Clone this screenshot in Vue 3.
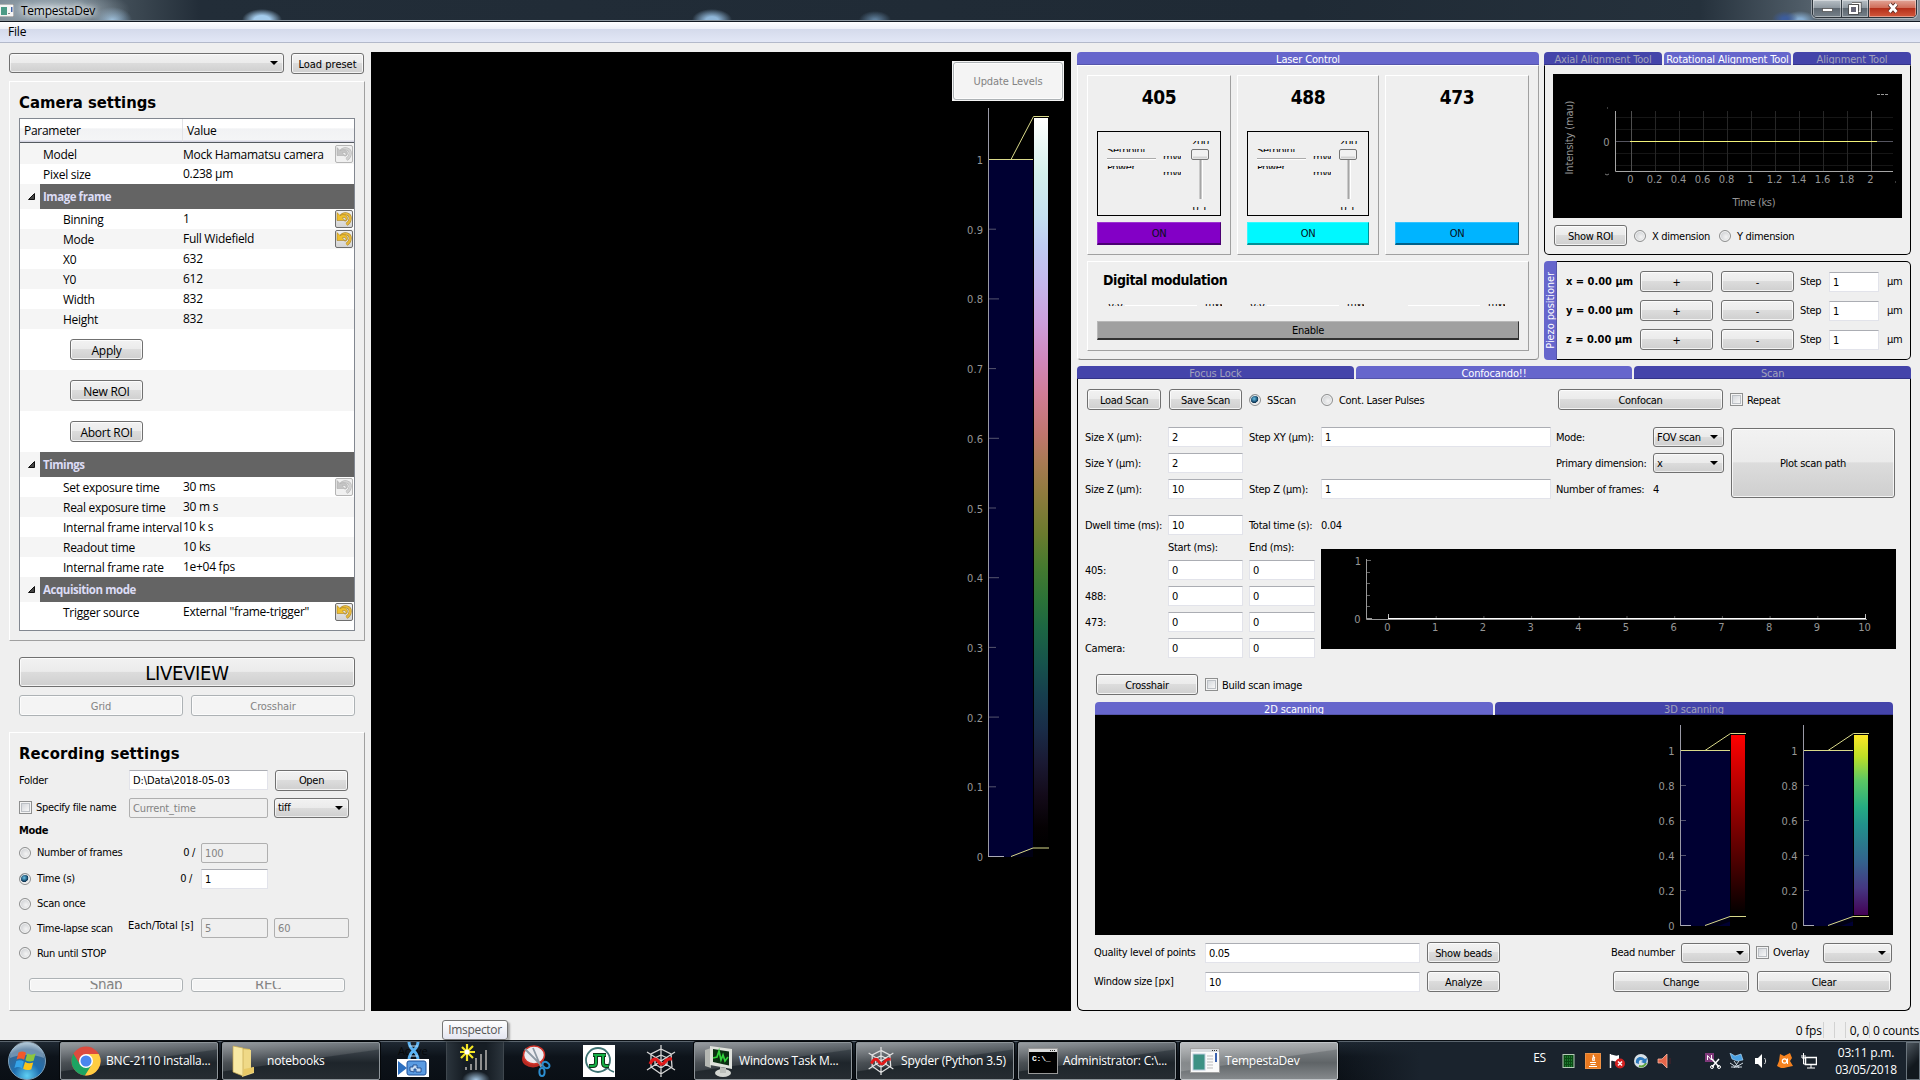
<script setup>
const params = [
  { name: 'Model', value: 'Mock Hamamatsu camera', lvl: 1, h: 21, undo: 'off', odd: true, big: true },
  { name: 'Pixel size', value: '0.238 µm', lvl: 1, h: 20 },
  { name: 'Image frame', group: true, h: 25 },
  { name: 'Binning', value: '1', h: 20, undo: 'on' },
  { name: 'Mode', value: 'Full Widefield', h: 20, undo: 'on', odd: true },
  { name: 'X0', value: '632', h: 20 },
  { name: 'Y0', value: '612', h: 20, odd: true },
  { name: 'Width', value: '832', h: 20 },
  { name: 'Height', value: '832', h: 20, odd: true },
  { action: 'Apply', h: 41 },
  { action: 'New ROI', h: 41, odd: true },
  { action: 'Abort ROI', h: 41 },
  { name: 'Timings', group: true, h: 25 },
  { name: 'Set exposure time', value: '30 ms', h: 20, undo: 'off' },
  { name: 'Real exposure time', value: '30 m s', h: 20, odd: true },
  { name: 'Internal frame interval', value: '10 k s', h: 20 },
  { name: 'Readout time', value: '10 ks', h: 20, odd: true },
  { name: 'Internal frame rate', value: '1e+04 fps', h: 20 },
  { name: 'Acquisition mode', group: true, h: 25 },
  { name: 'Trigger source', value: 'External "frame-trigger"', h: 20, undo: 'on' },
]
const lasers = [
  { name: '405', color: '#8300c6', edge: '#4b0072', control: true },
  { name: '488', color: '#00f8ff', edge: '#009196', control: true },
  { name: '473', color: '#00b4ff', edge: '#00618a', control: false },
]
const mainTicks = Array.from({ length: 11 }, (_, i) => ({
  label: i === 0 ? '0' : i === 10 ? '1' : (i / 10).toFixed(1),
  y: 804.5 - i * 69.7,
  w: i % 2 ? 7 : 10,
}))
const subTicks = [0, 0.2, 0.4, 0.6, 0.8, 1].map((v) => ({ label: String(v), y: 210.5 - v * 175 }))
const alignTicks = ['0', '0.2', '0.4', '0.6', '0.8', '1', '1.2', '1.4', '1.6', '1.8', '2'].map((label, i) => ({ label, x: 78.5 + i * 24 }))
const pulseTicks = Array.from({ length: 11 }, (_, i) => ({ label: String(i), x: 67.5 + i * 47.7 }))
const axes = ['x', 'y', 'z']
const channels = ['405:', '488:', '473:', 'Camera:']
</script>

<template>
  <div class="screen">
    <header class="titlebar">
      <svg class="appicon" width="15" height="13" viewBox="0 0 15 13"><rect x="0" y="0" width="15" height="13" fill="#f4f4f4" stroke="#777" /><rect x="2" y="3" width="6" height="8" fill="#4b9a86" /><rect x="9" y="9" width="2" height="1" fill="#888" /><rect x="12" y="3" width="1.5" height="5" fill="#4466a8" /></svg>
      <span class="apptitle">TempestaDev</span>
      <div class="winbtns">
        <span class="wb min"><svg width="28" height="17"><rect x="9.5" y="8.5" width="10" height="3" fill="#fff" stroke="#555" stroke-width=".8" /></svg></span>
        <span class="wb max"><svg width="26" height="17"><path d="M10 3.500h8v8h-2" fill="none" stroke="#444" stroke-width="3" /><path d="M10 3.500h8v8h-2" fill="none" stroke="#fff" stroke-width="1.600" /><rect x="8" y="6" width="7" height="7" fill="none" stroke="#444" stroke-width="3.500" /><rect x="8" y="6" width="7" height="7" fill="#667" stroke="#fff" stroke-width="2" /></svg></span>
        <span class="wb close"><svg width="47" height="17"><path d="M20.500 4l7 8M27.500 4l-7 8" stroke="#5a2a22" stroke-width="4.500" /><path d="M20.500 4l7 8M27.500 4l-7 8" stroke="#fff" stroke-width="2.800" /></svg></span>
      </div>
    </header>
    <nav class="menubar">File</nav>

    <main class="body">
      <section class="left">
        <div class="preset">
          <div class="combo presetcombo"><i class="arrow"></i></div>
          <button class="btn presetbtn">Load preset</button>
        </div>
        <div class="frame camera">
          <h1>Camera settings</h1>
          <div class="tree">
            <div class="treehead"><span>Parameter</span><span>Value</span></div>
            <div v-for="p in params" :key="p.name || p.action" class="prow" :class="{ odd: p.odd, group: p.group, action: p.action, top: p.lvl }" :style="{ height: p.h + 'px' }">
              <template v-if="p.group">
                <span class="twist"><svg width="7" height="7"><path d="M6.500 .5v6h-6z" fill="#444" stroke="#111" /></svg></span>
                <span class="gname">{{ p.name }}</span>
              </template>
              <button v-else-if="p.action" class="btn pact">{{ p.action }}</button>
              <template v-else>
                <span class="pname">{{ p.name }}</span>
                <span class="pval" :class="{ low: p.big }">{{ p.value }}</span>
                <span v-if="p.undo" class="undo" :class="p.undo">
                  <svg width="16" height="16" viewBox="0 0 16 16"><path class="u3" d="M4.500 5.500C8 .8 14.500 2.500 14.200 7.500c-.1 2.500-1.500 4.500-3.700 6" /><path class="u2" d="M4.500 5.500C8 .8 14.500 2.500 14.200 7.500c-.1 2.500-1.500 4.500-3.700 6" /><path class="u1" d="M1 1.500v8h8L6.300 7C8 5.800 10 6.600 10 8.300c0 .8-.4 1.400-1.200 1.900 1.700-.3 2.700-1.300 2.700-3C11.500 4 7.500 2.500 4 4.600z" /></svg>
                </span>
              </template>
            </div>
          </div>
        </div>
        <div class="live">
          <button class="btn liveview">LIVEVIEW</button>
          <div class="pair"><button class="btn off">Grid</button><button class="btn off">Crosshair</button></div>
        </div>
        <div class="frame recording">
          <h1>Recording settings</h1>
          <div class="rec">
            <span class="lbl">Folder</span><div class="inp span2 path">D:\Data\2018-05-03</div><button class="btn open">Open</button>
            <span class="lbl"><i class="check"></i>Specify file name</span><div class="inp dis span2">Current_time</div><div class="combo tiff">tiff<i class="arrow"></i></div>
            <b class="mode">Mode</b>
            <span class="lbl"><i class="radio"></i>Number of frames</span><span class="cnt">0 /</span><div class="inp dis">100</div><span></span>
            <span class="lbl"><i class="radio on"></i>Time (s)</span><span class="cnt two">0 /</span><div class="inp">1</div><span></span>
            <span class="lbl full"><i class="radio"></i>Scan once</span>
            <span class="lbl"><i class="radio"></i>Time-lapse scan</span><span class="each">Each/Total [s]</span><div class="inp dis">5</div><div class="inp dis last">60</div>
            <span class="lbl full"><i class="radio"></i>Run until STOP</span>
          </div>
          <div class="snaprow"><button class="btn off"><span>Snap</span></button><button class="btn off"><span>REC</span></button></div>
        </div>
      </section>

      <section class="view">
        <svg class="hist" width="700" height="959">
          <rect x="618" y="108" width="44" height="697" fill="#000032" />
          <path d="M617.500 56v749" stroke="#9a9aa6" />
          <g v-for="t in mainTicks" :key="t.label">
            <path :d="`M618 ${t.y}h${t.w}`" stroke="#55556e" />
            <text x="612" :y="t.y + 4.5" text-anchor="end" class="tick" :textLength="t.label.length > 1 ? 16 : 6">{{ t.label }}</text>
          </g>
          <foreignObject x="663" y="66" width="14" height="729"><div class="cube"></div></foreignObject>
          <path d="M618 107.500h44M640 107.500L662.500 64.500H678" stroke="#d9d98a" fill="none" />
          <path d="M617 804.500h16" stroke="#aaaab8" />
          <path d="M640 805l22-8.500v8.500z" fill="#000" opacity=".6" />
          <path d="M640 804.500l22-8.500h16" stroke="#d9d98a" fill="none" />
        </svg>
        <div class="updwrap"><button class="btn off upd">Update Levels</button></div>
      </section>

      <section class="docks">
        <div class="toprow">
          <div class="dock laser">
            <div class="tabs"><span class="tab act">Laser Control</span></div>
            <div class="dbody lbody">
              <div class="lcards">
                <div v-for="l in lasers" :key="l.name" class="frame lcard">
                  <h2>{{ l.name }}</h2>
                  <div class="lctl" :class="{ none: !l.control }">
                    <template v-if="l.control">
                      <div class="sets">
                        <div class="clip"><span>Setpoint</span></div>
                        <i class="groove"></i>
                        <div class="clip"><span>Power</span></div>
                      </div>
                      <div class="units"><div class="clip"><span>mW</span></div><div class="clip"><span>mW</span></div></div>
                      <div class="slide">
                        <div class="clip"><span>200</span></div>
                        <svg width="20" height="56"><path d="M10.500 10v41" stroke="#a5a5a5" stroke-width="2" /><path d="M12.500 10v41" stroke="#fff" /><rect x="1.500" y="1.500" width="17" height="10" rx="1.500" fill="#f1f1f1" stroke="#767676" /><path d="M3 9.500h14" stroke="#d2d2d2" stroke-width="2" /></svg>
                        <div class="clip"><span>0.1</span></div>
                      </div>
                    </template>
                  </div>
                  <button class="onbtn" :style="{ background: l.color, borderRightColor: l.edge, borderBottomColor: l.edge }">ON</button>
                </div>
              </div>
              <div class="frame digital">
                <h3>Digital modulation</h3>
                <div class="drow"><div v-for="(l, i) in lasers" :key="i" class="dcell"><div class="clip"><span>{{ i < 2 ? '0.0' : '' }}</span></div><i></i><div class="clip mw"><span>mW</span></div></div></div>
                <button class="enable">Enable</button>
              </div>
            </div>
          </div>

          <div class="rightcol">
            <div class="dock align">
              <div class="tabs atabs"><span class="tab">Axial Alignment Tool</span><span class="tab act">Rotational Alignment Tool</span><span class="tab">Alignment Tool</span></div>
              <div class="dbody abody">
                <svg width="349" height="144" class="plot">
                  <path d="M63 43.500h277M63 55.500h277M63 79.500h277M63 91.500h277" stroke="#161616" />
                  <path v-for="t in alignTicks" :key="t.x" :d="`M${t.x} 37v60`" :stroke="t.label === '0' || t.label === '2' ? '#505050' : '#262626'" />
                  <path d="M62.500 37v60.500H340" stroke="#a6a6a6" fill="none" />
                  <path d="M63 67.500h277" stroke="#555560" />
                  <path d="M77 67.500h247" stroke="#f2f27a" />
                  <path d="M324 20.500h12" stroke="#999" stroke-dasharray="3 1" />
                  <text v-for="t in alignTicks" :key="t.label" :x="t.x - 1" y="109" text-anchor="middle" class="tick">{{ t.label }}</text>
                  <text x="53.500" y="72" text-anchor="middle" class="tick">0</text>
                  <path d="M52 100l2 1 2-1M54 34h1M342 108h1" stroke="#777" fill="none" />
                  <text x="201" y="132" text-anchor="middle" class="tick" textLength="43">Time (ks)</text>
                  <text transform="translate(20 63.500) rotate(-90)" text-anchor="middle" class="tick" textLength="74">Intensity (mau)</text>
                </svg>
                <div class="roi"><button class="btn">Show ROI</button><i class="radio"></i><span class="xd">X dimension</span><i class="radio"></i><span>Y dimension</span></div>
              </div>
            </div>
            <div class="dock piezo">
              <div class="vtab"><span>Piezo positioner</span></div>
              <div class="pbody">
                <div v-for="a in axes" :key="a" class="prow2"><b>{{ a }} = 0.00 µm</b><button class="btn">+</button><button class="btn">-</button><span class="step">Step</span><div class="inp">1</div><span class="um">µm</span></div>
              </div>
            </div>
          </div>
        </div>

        <div class="dock scan">
          <div class="tabs stabs"><span class="tab">Focus Lock</span><span class="tab act">Confocando!!</span><span class="tab">Scan</span></div>
          <div class="sbody">
            <div class="srow">
              <button class="btn b1">Load Scan</button><button class="btn b2">Save Scan</button><i class="radio on"></i><span class="t1">SScan</span><i class="radio"></i><span class="t2">Cont. Laser Pulses</span><button class="btn b3">Confocan</button><i class="check"></i><span>Repeat</span>
            </div>
            <div class="sgrid">
              <span>Size X (µm):</span><div class="inp">2</div><span class="c4">Step XY (µm):</span><div class="inp c6">1</div><span class="c8">Mode:</span><div class="combo c9">FOV scan<i class="arrow"></i></div>
              <button class="btn plotbtn">Plot scan path</button>
              <span class="c1">Size Y (µm):</span><div class="inp">2</div><span class="c8">Primary dimension:</span><div class="combo c9">x<i class="arrow"></i></div>
              <span class="c1">Size Z (µm):</span><div class="inp">10</div><span class="c4">Step Z (µm):</span><div class="inp c6">1</div><span class="c8">Number of frames:</span><span class="c9">4</span>
            </div>
            <div class="tgrid">
              <span>Dwell time (ms):</span><div class="inp">10</div><span class="c4">Total time (s):</span><span class="c6">0.04</span>
              <span class="c2">Start (ms):</span><span class="c4">End (ms):</span>
              <template v-for="c in channels" :key="c"><span class="c1">{{ c }}</span><div class="inp">0</div><div class="inp c4">0</div></template>
              <svg class="pulse" width="575" height="100">
                <path d="M45.500 10v60.500H546" stroke="#9a9a9a" fill="none" />
                <path d="M46 11.500h4M46 23.500h3M46 34.500h3M46 46.500h3M46 57.500h3" stroke="#666" />
                <path v-for="t in pulseTicks" :key="t.x" :d="`M${t.x} 67v3`" stroke="#555" />
                <path d="M67.500 65v4M544.500 65v5" stroke="#bbb" />
                <path d="M46 69.500h5" stroke="#999" />
                <path d="M67 69.500h478" stroke="#fff" />
                <text x="40" y="16" text-anchor="end" class="tick">1</text><text x="39.500" y="74" text-anchor="end" class="tick">0</text>
                <text v-for="t in pulseTicks" :key="t.label" :x="t.x - 1" y="82" text-anchor="middle" class="tick">{{ t.label }}</text>
              </svg>
            </div>
            <div class="crow"><button class="btn">Crosshair</button><i class="check"></i><span>Build scan image</span></div>
            <div class="tabs ctabs"><span class="tab act">2D scanning</span><span class="tab">3D scanning</span></div>
            <svg class="imgs" width="798" height="220">
              <defs>
                <linearGradient id="red" x2="0" y2="1"><stop offset="0" stop-color="#f00" /><stop offset="1" stop-color="#000" /></linearGradient>
                <linearGradient id="vir" x2="0" y2="1"><stop offset="0" stop-color="#fde725" /><stop offset=".12" stop-color="#bddf26" /><stop offset=".25" stop-color="#5cc863" /><stop offset=".4" stop-color="#25ac82" /><stop offset=".5" stop-color="#21918c" /><stop offset=".7" stop-color="#33638d" /><stop offset=".85" stop-color="#453781" /><stop offset="1" stop-color="#440154" /></linearGradient>
              </defs>
              <g v-for="(g, i) in ['red', 'vir']" :key="g" :transform="`translate(${i * 123} 0)`">
                <rect x="586" y="36" width="49" height="175" fill="#000032" />
                <path d="M585.500 10v201" stroke="#9a9aa6" />
                <g v-for="t in subTicks" :key="t.label"><path :d="`M586 ${t.y}h5`" stroke="#55556e" /><text x="579.500" :y="t.y + 4.500" text-anchor="end" class="tick" :textLength="t.label.length > 1 ? 16 : 6">{{ t.label }}</text></g>
                <rect x="636" y="20" width="14" height="180" :fill="`url(#${g})`" />
                <path d="M586 35.500h49M610 35.500L635.500 18.500H651" stroke="#d9d98a" fill="none" />
                <path d="M586 210.500h10" stroke="#aaaab8" />
                <path d="M610 211l25-9.500v5l-12 4.500z" fill="#000" opacity=".6" />
                <path d="M610 210.500l25-9H651" stroke="#d9d98a" fill="none" />
              </g>
            </svg>
            <div class="bgrid">
              <span>Quality level of points</span><div class="inp">0.05</div><button class="btn">Show beads</button>
              <div class="bead"><span>Bead number</span><div class="combo"><i class="arrow"></i></div><i class="check"></i><span class="ov">Overlay</span><div class="combo"><i class="arrow"></i></div></div>
              <span>Window size [px]</span><div class="inp">10</div><button class="btn">Analyze</button>
              <div class="bead two"><button class="btn">Change</button><button class="btn">Clear</button></div>
            </div>
          </div>
        </div>
      </section>
    </main>

    <footer class="status"><span class="s1">0 fps</span><i></i><i class="g1"></i><i class="g2"></i><span class="s2">0, 0</span><i></i><span class="s3">0 counts</span></footer>
    <div class="tooltip">Imspector</div>

    <footer class="taskbar">
      <svg class="orb" width="40" height="40" viewBox="0 0 40 40">
        <defs><radialGradient id="orb" cx=".5" cy=".9" r=".9"><stop offset="0" stop-color="#5fd0f4" /><stop offset=".4" stop-color="#1f6fb0" /><stop offset=".8" stop-color="#3a668f" /><stop offset="1" stop-color="#9bb8cc" /></radialGradient></defs>
        <circle cx="20" cy="20" r="18.500" fill="url(#orb)" stroke="#7fa3bd" stroke-width="1" />
        <path d="M3 17a17 17 0 0 1 34 0c-9-4-25-4-34 0z" fill="#fff" opacity=".28" />
        <path d="M11.500 11.500c3-1.500 5-1.200 7.500.3l-1.900 7c-2.500-1.500-4.600-1.600-7.500-.4z" fill="#f2592a" />
        <path d="M20.300 12.500c2.700 1.500 5 1.500 8.300.1l-2 7.100c-3 1.200-5.400 1-8.200-.5z" fill="#8cc63e" />
        <path d="M9.300 20c2.800-1.200 5-1 7.500.5l-1.900 6.800c-2.600-1.500-4.600-1.600-7.500-.3z" fill="#35a3e8" />
        <path d="M18 21c2.800 1.500 5.100 1.600 8.200.4l-1.900 6.800c-3 1.300-5.500 1.100-8.200-.4z" fill="#fcc419" />
      </svg>
      <div class="task first">
        <svg width="30" height="30" viewBox="0 0 30 30"><circle cx="15" cy="15" r="14.500" fill="#dd4b3e" /><path d="M2.400 7.800A14.500 14.500 0 0 0 14 29.500l7-10.600-12-.4z" fill="#1da462" /><path d="M15 8h12.700A14.500 14.500 0 0 1 14 29.500l7.400-12z" fill="#ffcd42" /><circle cx="15" cy="15" r="7" fill="#fff" /><circle cx="15" cy="15" r="5.500" fill="#4a86ee" /></svg>
        <span>BNC-2110 Installa...</span>
      </div>
      <div class="task second">
        <svg width="24" height="32" viewBox="0 0 24 32"><path d="M9 3l9 1v22l-9 3z" fill="#d9bc55" /><path d="M10 4l9 1v18l3-1v6l-12 4z" fill="#efd987" /><path d="M1 1l10 2v28L1 27z" fill="#f8e9a4" stroke="#c5a84d" stroke-width=".7" /><path d="M12 24l10-2v5l-11 4z" fill="#e8c966" /></svg>
        <span>notebooks</span>
      </div>
      <div class="quick">
        <div class="q active"><b>Active</b><svg width="32" height="38" viewBox="0 0 32 38"><path d="M12 0c0 9 9 8 9 18M21 0c0 9-9 8-9 18" stroke="#5bb3f2" stroke-width="3" fill="none" /><path d="M12 4h9M13 14h8" stroke="#b6ddfa" /><rect x="0" y="17" width="32" height="18" fill="#fff" /><path d="M1 19l9 7-9 7z" fill="#2c6fc0" /><rect x="10" y="19" width="19" height="14" rx="2" fill="#5a9be2" stroke="#1b4f9a" /><path d="M13 29v-4h3v-2h4v3h4v4h-5v-3h-2v3z" fill="#c5dcf5" stroke="#143c80" stroke-width=".8" /></svg></div>
        <div class="q insp"><svg width="34" height="36" viewBox="0 0 34 36"><path d="M9 1v17M2 9h15M4 4l11 11M15 3L3 15" stroke="#f4e626" stroke-width="2.200" /><circle cx="9" cy="9" r="2.500" fill="#fff" /><path d="M8 27v-3M13 27v-6M18 27V15M23 27V11M28 27V7" stroke="#8f8f8f" stroke-width="2" /></svg></div>
        <div class="q"><svg width="32" height="34" viewBox="0 0 32 34"><ellipse cx="12" cy="15" rx="11" ry="8.500" fill="#b82a22" /><ellipse cx="13" cy="11" rx="10.500" ry="9" fill="#ececf0" stroke="#d1362c" stroke-width="1.500" /><path d="M4 5l17 17M12 4l8 19" stroke="#8d98a3" stroke-width="1.800" /><ellipse cx="25" cy="21" rx="3.800" ry="2.800" fill="none" stroke="#2c8ed0" stroke-width="2" transform="rotate(35 25 21)" /><ellipse cx="21" cy="28" rx="2.600" ry="4" fill="none" stroke="#2c8ed0" stroke-width="2" /></svg></div>
        <div class="q"><svg width="32" height="32" viewBox="0 0 32 32"><rect width="32" height="32" fill="#fff" /><circle cx="15" cy="15" r="12" fill="none" stroke="#3d7373" stroke-width="1.800" /><path d="M21 25l4-2c1 2 3 3 6 4" fill="none" stroke="#3d7373" stroke-width="1.600" /><path d="M10 10h13M13 10v8c0 2-1 3-3 3H6M20 10v8c0 2 1 3 3 3h3" fill="none" stroke="#12331b" stroke-width="4" /><path d="M10.500 10h12M13 10v8c0 2-1 3-3 3H6.500M20 10v8c0 2 1 3 3 3h2.500" fill="none" stroke="#14b045" stroke-width="2" /></svg></div>
        <div class="q"><svg width="34" height="34" viewBox="0 0 34 34"><path d="M17 1v32M3 8l28 18M31 8L3 26M17 5l10 5 1 13-11 7-10-7 0-13zM17 11l6 3v6l-6 4-6-4v-6z" fill="none" stroke="#d6d6d6" stroke-width="1.300" /><path d="M6 20c3-6 6-6 8-3s4 5 7 1 4-3 7-3" fill="none" stroke="#e11919" stroke-width="3.200" /></svg></div>
      </div>
      <div class="task">
        <svg width="30" height="34" viewBox="0 0 30 34"><path d="M1 6l6-2v20l-6-2z" fill="#b5b8b3" /><path d="M6 2l22 3v20L6 21z" fill="#dfe2dc" /><path d="M9 5l16 2.500v14L9 18z" fill="#0b2f12" /><path d="M9 14l4-1 2-6 2 9 2-5 2 6 3-4" stroke="#32d13c" stroke-width="1.700" fill="none" /><ellipse cx="19" cy="29" rx="8" ry="4" fill="#d5d7d2" /><path d="M16 23l6 1v5h-6z" fill="#bcbfba" /></svg>
        <span>Windows Task M...</span>
      </div>
      <div class="task">
        <svg width="30" height="30" viewBox="0 0 34 34"><path d="M17 1v32M3 8l28 18M31 8L3 26M17 5l10 5 1 13-11 7-10-7 0-13zM17 11l6 3v6l-6 4-6-4v-6z" fill="none" stroke="#e2e2e2" stroke-width="1.400" /><path d="M6 20c3-6 6-6 8-3s4 5 7 1 4-3 7-3" fill="none" stroke="#e11919" stroke-width="3.200" /></svg>
        <span>Spyder (Python 3.5)</span>
      </div>
      <div class="task">
        <svg width="30" height="26" viewBox="0 0 30 26"><rect x=".5" y=".5" width="29" height="25" fill="#000" stroke="#999" /><rect x="1" y="1" width="28" height="3" fill="#dcdcdc" /><path d="M22 2.500h6" stroke="#333" stroke-dasharray="1 1" /><text x="4" y="13" font-size="8" fill="#fff" font-family="Liberation Mono, monospace" font-weight="bold">C:\_</text></svg>
        <span>Administrator: C:\...</span>
      </div>
      <div class="task current">
        <svg width="30" height="25" viewBox="0 0 30 25"><rect x=".5" y=".5" width="29" height="24" fill="#fafafa" stroke="#a2a2a2" /><rect x="1" y="1" width="28" height="3" fill="#d8dce0" /><path d="M22 2.500h6" stroke="#333" stroke-dasharray="1 1" /><rect x="3" y="6" width="12" height="16" fill="#3d9184" stroke="#bcd" /><path d="M17 8h6M17 11h6M17 14h6M17 17h6M17 20h6" stroke="#bbb" /><rect x="25" y="5" width="2" height="9" fill="#3a62b0" /></svg>
        <span>TempestaDev</span>
      </div>
      <div class="tray">
        <span class="es">ES</span>
        <svg width="16" height="16"><rect x="2" y="1.500" width="11" height="13" fill="#0a4a14" stroke="#b5cdb8" /><path d="M4 4h8M4 7h8M4 10h8M4 13h8" stroke="#2fa846" stroke-dasharray="1 1" /></svg>
        <svg width="16" height="16"><rect width="16" height="16" rx="1.500" fill="#e9791f" stroke="#f4ad6d" /><path d="M8 2c2 2-2 3 0 6M10 4c-2 1 0 2-1 4M5 9.500h6M5.500 11.500h5M4 13.500h8" stroke="#fff" fill="none" stroke-width="1.200" /></svg>
        <svg width="16" height="16"><path d="M1.500 1v14" stroke="#fff" stroke-width="1.500" /><path d="M2 2c3-1 4 2 8 0v6c-4 2-5-1-8 0z" fill="#fff" /><circle cx="11" cy="10.500" r="5" fill="#d32020" /><path d="M9 8.500l4 4M13 8.500l-4 4" stroke="#fff" stroke-width="1.500" /></svg>
        <svg width="16" height="16"><circle cx="8" cy="8" r="7" fill="#d7e1e8" /><path d="M3 10C2 4 8 2 12 6l2-1-1 6-5-2 2-1C8 6 5 7 6 11z" fill="#2c79bd" /><path d="M6 13c3 1 6 0 7-3" stroke="#5fa53c" stroke-width="2" fill="none" /></svg>
        <svg width="16" height="16"><path d="M1 6h4l5-5v14l-5-5H1z" fill="#e5664a" stroke="#f6b39f" stroke-width=".8" /><path d="M13 5v6" stroke="#54222a" /></svg>
        <svg class="gap" width="16" height="16"><rect width="9" height="9" fill="#80397b" /><path d="M2.500 7V2.500l4 4.500V2" stroke="#fff" fill="none" /><path d="M7 6l7 8M14 6l-7 8" stroke="#fff" stroke-width="1.500" /><circle cx="7" cy="14" r="1.500" fill="none" stroke="#fff" /><circle cx="14" cy="14" r="1.500" fill="none" stroke="#fff" /></svg>
        <svg width="16" height="16"><path d="M1 0l5 3 6-2 2 6-6 1-5-2z" fill="#4aa2e4" stroke="#bfe0f8" stroke-width=".6" /><path d="M1 10l6 4 7-4M2 14h11M5 8l5 7M10 8l-5 7" stroke="#d0dae2" fill="none" /></svg>
        <svg width="16" height="16"><path d="M2 5h3l4-4v14l-4-4H2z" fill="#fff" /><path d="M11.500 5c1.500 2 1.500 4 0 6" stroke="#ddd" fill="none" /></svg>
        <svg width="16" height="16"><path d="M3 1l4 2 6-3 2 5-2 3 3 5-5 1-4 1-3 0-4-2 2-5z" fill="#f5821f" /><circle cx="7.500" cy="8" r="2.200" fill="none" stroke="#fff" stroke-width="1.200" /><path d="M10.500 5.500V11" stroke="#fff" /></svg>
        <svg width="16" height="16"><rect x="4.500" y="4.500" width="11" height="7" fill="#1a232c" stroke="#fff" stroke-width="1.500" /><path d="M10 12v3M6 15h8M2.500 0v5M1 2v3h3V2M2.500 5v6H5" stroke="#fff" fill="none" /></svg>
        <div class="clock"><span>03:11 p.m.</span><span>03/05/2018</span></div>
        <i class="desk"></i>
      </div>
    </footer>
  </div>
</template>

<style>
body { background: #efefef; overflow: hidden; }
</style>

<style scoped>
* { box-sizing: border-box; }
.screen { width: 1920px; height: 1080px; overflow: hidden; position: relative; background: #efefef; color: #000; display: flex; flex-direction: column; font: 11px "DejaVu Sans Condensed", "DejaVu Sans", sans-serif; font-stretch: condensed; letter-spacing: -.3px; white-space: nowrap; }
i { font-style: normal; display: block; }
svg { display: block; flex: none; }
h1, h2, h3 { margin: 0; font-weight: bold; }
button { font: inherit; letter-spacing: inherit; color: inherit; padding: 0; }

.titlebar { height: 22px; flex: none; display: flex; align-items: flex-start; overflow: hidden; border-bottom: 1px solid #111820; box-shadow: inset 0 -1px #8a949c; background:
  radial-gradient(ellipse 80px 24px at 50px 10px, #b4c0c8 0, rgba(150,165,175,.75) 50%, transparent 100%),
  radial-gradient(ellipse 20px 13px at 112px 20px, #a0c6e6, transparent),
  radial-gradient(ellipse 20px 11px at 262px 20px, #a4cced 40%, transparent),
  radial-gradient(ellipse 20px 11px at 712px 20px, #8fb6d8 30%, transparent),
  radial-gradient(ellipse 16px 9px at 875px 20px, #5f7f9c 10%, transparent),
  radial-gradient(ellipse 13px 8px at 1785px 19px, #3c5c9c 20%, transparent),
  radial-gradient(ellipse 16px 9px at 1800px 20px, #86acd0 20%, transparent),
  linear-gradient(90deg, #6f7d88 0, #3a4650 140px, #222d38 200px, #1f2a35 1300px, #25313c 1700px, #4e5b66 1800px, #85909a 1920px); }
.appicon { margin: 4px 6px 0 -1px; }
.apptitle { font: 12px/22px "Open Sans", sans-serif; letter-spacing: -.25px; text-shadow: 0 0 6px #fff, 0 0 6px #fff; margin-left: 1px; }
.winbtns { margin: -1px 3px 0 auto; height: 19px; display: flex; border: 1px solid #2b333a; border-radius: 0 0 5px 5px; overflow: hidden; box-shadow: 0 0 0 1px rgba(255,255,255,.4); }
.wb { border-right: 1px solid #333c44; box-shadow: inset 0 0 0 1px rgba(255,255,255,.4); background: linear-gradient(#b8c0c6 0, #8d979f 48%, #5e6871 50%, #76818a 100%); }
.wb.close { border: 0; background: linear-gradient(#e2a597 0, #cf6a55 48%, #b5301a 50%, #d2583c 100%); }
.menubar { height: 21px; flex: none; padding-left: 8px; font: 12px/19px "Open Sans", sans-serif; letter-spacing: -.2px; border-bottom: 1px solid #b3b9ca; background: linear-gradient(#fff 0, #eef1f8 33%, #d4daeb 35%, #e2e7f6 100%); }

.body { height: 976px; flex: none; display: flex; }
.left { width: 371px; padding: 10px 6px 0 9px; flex: none; }
.btn { display: flex; align-items: center; justify-content: center; border: 1px solid #707070; border-radius: 3px; height: 21px; background: linear-gradient(#f2f2f2 0, #ebebeb 48%, #dcdcdc 50%, #cfcfcf 100%); box-shadow: inset 0 0 0 1px rgba(255,255,255,.75); overflow: hidden; padding-top: 1px; }
.btn.off { background: #f4f4f4; border-color: #adb2b5; color: #838383; box-shadow: inset 0 0 0 1px #fcfcfc; }
.combo { height: 20px; border: 1px solid #707070; border-radius: 3px; background: linear-gradient(#f2f2f2 0, #ebebeb 48%, #dcdcdc 50%, #cfcfcf 100%); box-shadow: inset 0 0 0 1px rgba(255,255,255,.6); display: flex; align-items: center; justify-content: space-between; padding: 0 5px 0 3px; }
.arrow { border: 4px solid transparent; border-top-color: #000; border-bottom: 0; margin-left: auto; }
.inp { height: 20px; background: #fff; border: 1px solid #e2e3ea; border-top-color: #abadb3; padding-left: 3px; line-height: 20px; }
.inp.dis { background: #efefef; border-color: #afafaf; border-radius: 2px; color: #838383; line-height: 20px; letter-spacing: -.15px; }
.path { letter-spacing: -.1px; }
.check { width: 13px; height: 13px; border: 1px solid #8e8f8f; background: linear-gradient(135deg, #cbcfd5, #f6f6f6 80%); box-shadow: inset 0 0 0 1px #f4f4f4, inset 0 0 0 2px #bcc0c5; flex: none; }
.radio { width: 12px; height: 12px; border: 1px solid #8e8f8f; border-radius: 50%; background: radial-gradient(circle at 60% 60%, #f4f4f4, #d0d2d5 70%); box-shadow: inset 0 0 0 1px #f4f4f4; flex: none; }
.radio.on { background: radial-gradient(circle at 42% 38%, #6cc3e8 0, #164b6e 38%, #0f3350 46%, #e8e8e8 52%); }
.frame { border: 1px solid; border-color: #fff #a0a0a0 #a0a0a0 #fff; }
.preset { display: flex; justify-content: space-between; padding-right: 1px; }
.presetcombo { width: 275px; }
.presetbtn { width: 73px; letter-spacing: 0; }
.camera { height: 560px; margin-top: 7px; padding: 0 9px; }
h1 { font-size: 16.500px; letter-spacing: 0; }
.camera h1 { height: 36px; line-height: 41px; }
.tree { height: 513px; border: 1px solid #828790; background: #fff; font: 12px "Open Sans", sans-serif; letter-spacing: -.28px; }
.treehead { height: 24px; display: flex; line-height: 23px; border-bottom: 1px solid #555a60; background: linear-gradient(#fff 40%, #f1f2f4 42%, #f4f5f6 90%, #ccd 100%); }
.treehead span { padding-left: 4px; width: 163px; border-right: 1px solid #e2e3e6; }
.treehead span + span { border: 0; }
.prow { display: flex; align-items: center; }
.prow.odd { background: #f5f5f5; }
.pname { width: 163px; padding-left: 43px; padding-top: 1px; flex: none; }
.top .pname { padding-left: 23px; }
.pval { margin-top: -1px; }
.pval.low { margin-top: 1px; }
.group { background: linear-gradient(90deg, #f5f5f5 20px, #646464 20px); font-weight: 700; font-size: 11.500px; color: #dcdcf5; letter-spacing: -.45px; }
.twist { width: 20px; padding-left: 8px; }
.gname { padding-left: 3px; }
.pact { width: 73px; margin-left: 50px; }
.undo { width: 18px; height: 18px; margin: 0 1px 0 auto; border: 1px solid #6e6e6e; border-radius: 2px; background: linear-gradient(#f0f0f0, #d4d4d4); }
.undo.off { border-color: #b5b5b5; background: #f0f0f0; }
.u1 { fill: #efc02f; stroke: #9b7314; stroke-width: .5; }
.u2 { fill: none; stroke: #e6b83c; stroke-width: 2; }
.u3 { fill: none; stroke: #a9852a; stroke-width: 3; }
.off .u1 { fill: #c4c4c4; stroke: #a5a5a5; }
.off .u2 { stroke: #d2d2d2; }
.off .u3 { stroke: #b4b4b4; }
.live { padding: 16px 10px 0; height: 91px; }
.liveview { width: 336px; height: 30px; font-size: 20px; padding-top: 2px; }
.pair { display: flex; gap: 8px; margin-top: 8px; }
.pair .btn { width: 164px; letter-spacing: -.1px; }
.recording { height: 279px; padding: 0 9px; }
.recording h1 { height: 34px; line-height: 42px; letter-spacing: .15px; }
.rec { display: grid; grid-template-columns: 110px 72px 67px 81px; grid-template-rows: 28px 27px 19px 25px 27px 23px 26px 24px; align-items: center; margin-top: -1px; }
.lbl { display: flex; align-items: center; gap: 6px; }
.lbl .check { margin-right: -2px; }
.full { grid-column: 1 / -1; }
.span2 { grid-column: 2 / 4; }
.open { width: 73px; margin-left: 7px; }
.tiff, .last { width: 75px; margin-left: 6px; }
.mode { grid-column: 1 / -1; }
.cnt { text-align: right; padding-right: 6px; }
.cnt.two { padding-right: 9px; }
.each { padding-bottom: 5px; margin-left: -1px; letter-spacing: -.05px; }
.snaprow { display: flex; gap: 8px; padding: 13px 10px 0; }
.snaprow .btn { width: 154px; height: 14px; padding: 0; }
.snaprow span { font-size: 15px; letter-spacing: -.4px; line-height: 14px; height: 8px; overflow: hidden; display: flex; align-items: center; }

.view { width: 700px; height: 959px; margin-top: 9px; background: #000; flex: none; display: grid; }
.hist { grid-area: 1 / 1; }
.updwrap { grid-area: 1 / 1; justify-self: end; margin: 9px 7px 0 0; width: 112px; height: 40px; background: #f4f4f4; padding: 1px; }
.upd { width: 110px; height: 38px; letter-spacing: -.1px; }
.tick { fill: #969696; font-size: 11px; letter-spacing: 0; }
.cube { height: 729px; background: linear-gradient(#fff 0, #d4f0ec 7.600%, #c4dff0 13.700%, #bfcbf2 17.700%, #c4b8ec 22.500%, #cc9fdc 28%, #d088bd 33%, #d07c95 38%, #c0766e 43.400%, #a87a52 47.400%, #8f7b3e 51.500%, #6b7b2e 57%, #457a2f 61.600%, #2a7238 66.300%, #1c6643 70%, #16524c 75%, #163f4e 79%, #192c48 83.800%, #1a1933 88.500%, #130a19 93%, #050103 97.300%, #000 100%); }

.docks { width: 849px; padding: 9px 9px 0 6px; }
.toprow { display: flex; justify-content: space-between; height: 308px; }
.tabs { display: flex; gap: 2px; height: 13px; }
.tab { flex: 1 1 0; min-width: 0; height: 13px; border-radius: 4px 4px 0 0; text-align: center; line-height: 15px; background: #4444aa; color: #a2a2bb; border-bottom: 1px solid #333388; overflow: hidden; letter-spacing: -.15px; }
.tab.act { background: #6666cc; color: #fff; border-bottom-color: #5555aa; }
.laser { width: 462px; }
.lbody { height: 295px; padding: 10px 9px 0; border: 1px solid; border-color: #fff #a0a0a0 #888 #fff; border-radius: 0 0 4px 4px; }
.lcards { display: grid; grid-template-columns: 144px 142px 144px; gap: 6px; }
.lcard { height: 180px; padding: 0 9px; margin-top: -1px; }
h2 { font-size: 19px; line-height: 43px; height: 55px; text-align: center; letter-spacing: -.4px; }
.lctl { height: 85px; border: 1px solid #000; display: flex; }
.lctl.none { border-color: transparent; }
.clip { height: 3px; overflow: hidden; }
.clip span { display: block; margin-top: -5px; line-height: 14px; }
.sets { width: 49px; margin: 17px 0 0 9px; }
.groove { height: 2px; background: #aaa; border-bottom: 1px solid #fff; margin: 6px 0 6px; }
.units { margin: 24px 0 0 7px; width: 18px; }
.units .clip + .clip { margin-top: 13px; }
.slide { margin: 9px 10px 0 auto; width: 20px; }
.slide .clip { text-align: center; }
.slide svg { margin: 4px 0 3px; }
.onbtn { width: 100%; height: 23px; padding-top: 1px; margin-top: 6px; border: 1px solid; border-color: rgba(255,255,255,.2) #000 #000 rgba(255,255,255,.2); border-bottom-width: 2px; color: #071018; }
.digital { height: 90px; margin-top: 6px; padding: 0 9px; }
h3 { font-size: 14px; line-height: 37px; height: 41px; padding-left: 6px; letter-spacing: -.42px; }
.drow { display: grid; grid-template-columns: 142px 141px 120px; height: 4px; padding-left: 11px; }
.dcell { display: flex; align-items: center; height: 4px; }
.dcell i { width: 72px; height: 1px; background: #fff; }
.dcell .clip { width: 17px; height: 2px; }
.dcell .clip span { margin-top: -7px; }
.dcell .mw { margin-left: 8px; }
.enable { width: 100%; height: 19px; padding-top: 1px; margin-top: 14px; background: #a0a0a0; border: 1px solid; border-color: #b8b8b8 #333 #333 #b8b8b8; border-bottom-width: 2px; }
.rightcol { width: 367px; }
.atabs .tab:first-child { flex: none; width: 118px; }
.atabs .tab:nth-child(2) { flex: none; width: 127px; }
.abody { height: 190px; border: 1px solid #000; border-top-color: #efefef; border-radius: 0 0 5px 5px; padding: 8px; }
.plot { background: #000; }
.roi { display: flex; align-items: center; margin-top: 7px; padding-left: 1px; }
.roi .btn { width: 73px; margin-right: 7px; }
.roi .radio { margin-right: 6px; }
.roi span { padding-top: 1px; }
.xd { width: 67px; }
.piezo { display: flex; height: 99px; margin-top: 6px; }
.vtab { width: 13px; background: #6666cc; border-right: 1px solid #5555aa; border-radius: 4px 0 0 4px; color: #fff; display: flex; align-items: center; justify-content: center; }
.vtab span { writing-mode: vertical-rl; transform: rotate(180deg); line-height: 13px; letter-spacing: -.1px; }
.pbody { flex: 1; border: 1px solid #000; border-left: 0; border-radius: 0 5px 5px 0; padding: 9px 0 0 9px; display: flex; flex-direction: column; gap: 8px; }
.prow2 { display: flex; align-items: center; }
.prow2 b { width: 74px; letter-spacing: 0; }
.prow2 .btn { width: 73px; margin-right: 8px; }
.step { width: 27px; margin-left: -2px; }
.prow2 .inp { width: 50px; margin-left: 2px; }
.um { margin-left: 8px; }

.scan { margin-top: 6px; }
.sbody { height: 632px; border: 1px solid #000; border-top: 0; border-radius: 0 0 6px 6px; padding: 10px 14px 0 7px; }
.srow { display: flex; align-items: center; padding-left: 2px; height: 21px; }
.srow span { padding-top: 1px; }
.b1 { width: 74px; margin-right: 8px; }
.b2 { width: 73px; margin-right: 7px; }
.srow .radio { margin-right: 6px; }
.t1 { width: 54px; }
.t2 { width: 219px; }
.b3 { width: 165px; margin-right: 7px; }
.srow .check { margin-right: 4px; }
.sgrid, .tgrid { display: grid; grid-template-columns: 83px 75px 6px 66px 6px 230px 5px 97px 71px 7px 164px; align-items: center; grid-auto-rows: 26px; }
.sgrid { margin-top: 14px; }
.tgrid { margin-top: 10px; grid-template-rows: 26px 19px; }
.c1 { grid-column: 1; }
.c2 { grid-column: 2; }
.c4 { grid-column: 4; }
.c6 { grid-column: 6; }
.c8 { grid-column: 8; }
.c9 { grid-column: 9; }
.plotbtn { grid-column: 11; grid-row: 1 / 4; height: 70px; }
.pulse { grid-column: 6 / 12; grid-row: 2 / 7; align-self: start; margin-top: 11px; background: #000; }
.crow { display: flex; align-items: center; margin: 13px 0 0 11px; }
.crow .btn { width: 102px; margin-right: 7px; }
.crow .check { margin-right: 4px; }
.crow span { padding-top: 1px; }
.ctabs { margin: 7px 3px 0 10px; }
.imgs { background: #000; margin-left: 10px; }
.bgrid { display: grid; grid-template-columns: 111px 215px 7px 73px 111px 282px; grid-auto-rows: 29px; align-items: center; margin: 3px 0 0 9px; }
.bgrid .btn { grid-column: 4; }
.bead { grid-column: 6; display: flex; align-items: center; }
.bead > span:first-child { width: 70px; }
.bead .combo { width: 69px; }
.bead .check { margin: 0 4px 0 6px; }
.ov { width: 50px; }
.bead.two .btn { width: 136px; margin-left: 2px; }
.bead.two .btn + .btn { margin-left: 8px; width: 134px; }

.status { height: 21px; flex: none; display: flex; align-items: flex-start; justify-content: flex-end; font: 12px/24px "Open Sans", sans-serif; letter-spacing: -.2px; padding-right: 1px; }
.status i { width: 1px; height: 16px; margin-top: 3px; background: #d2d2d2; }
.s1 { margin-right: 1px; }
.g1 { margin-left: 10px; }
.g2 { margin: 0 4px 0 10px; }
.s3 { margin-left: 3px; }
.tooltip { position: absolute; left: 442px; top: 1020px; width: 66px; height: 20px; border: 1px solid #767676; border-radius: 3px; background: linear-gradient(#fff, #e4e5f0); font: 12px/18px "Open Sans", sans-serif; text-align: center; color: #575757; box-shadow: 2px 2px 2px rgba(0,0,0,.3); z-index: 3; }

.taskbar { height: 40px; flex: none; display: flex; align-items: center; border-top: 1px solid #0c1116; box-shadow: inset 0 1px #5a646d; background: linear-gradient(90deg, transparent 0, transparent 1330px, #1a232d 1420px), linear-gradient(#202a34, #0d131a 40%, #0a0f15); color: #fff; font: 12px "Open Sans", sans-serif; letter-spacing: -.2px; }
.orb { margin: 0 13px 0 7px; width: 40px; }
.task { width: 158px; height: 38px; margin-right: 4px; flex: none; display: flex; align-items: center; padding-left: 9px; gap: 5px; border: 1px solid #8d9499; border-radius: 2px; box-shadow: 0 0 0 1px #05080b; background: linear-gradient(172deg, rgba(255,255,255,.42) 0, rgba(255,255,255,.12) 48%, transparent 50%), linear-gradient(#4c545b, #1e252b 55%, #262c31); }
.task.current { background: linear-gradient(172deg, rgba(255,255,255,.42) 0, rgba(255,255,255,.18) 48%, transparent 50%), linear-gradient(#8c9093, #5f6467 55%, #85898c); border-color: #c0c4c7; }
.first { padding-left: 10px; }
.second { padding-left: 9px; }
.second span { margin-left: 6px; }
.quick { display: flex; align-items: center; width: 312px; margin-left: -2px; flex: none; }
.q { width: 62px; height: 38px; flex: none; display: flex; align-items: center; justify-content: center; }
.active { position: relative; }
.active b { position: absolute; left: 16px; top: 1px; font-weight: normal; font-size: 11px; color: #05080a; }
.active svg { position: relative; }
.insp { background: radial-gradient(ellipse 14px 9px at 29px 38px, #a9cbe8, transparent), linear-gradient(90deg, #2b343c, #161d24 30%, #161d24 70%, #2b343c); width: 58px; margin: 0 2px; border: solid #3f474e; border-width: 0 1px; }
.tray { flex: 1; display: flex; align-items: center; justify-content: flex-end; }
.tray svg { margin-right: 8px; }
.tray .gap { margin-left: 24px; }
.es { margin: -6px 15px 0 0; }
.clock { width: 62px; margin: 0 9px 0 10px; display: flex; flex-direction: column; align-items: center; line-height: 17px; }
.desk { width: 14px; height: 38px; border: 1px solid #6b757d; background: linear-gradient(135deg, #4e575f, #12181e 60%); }
</style>
